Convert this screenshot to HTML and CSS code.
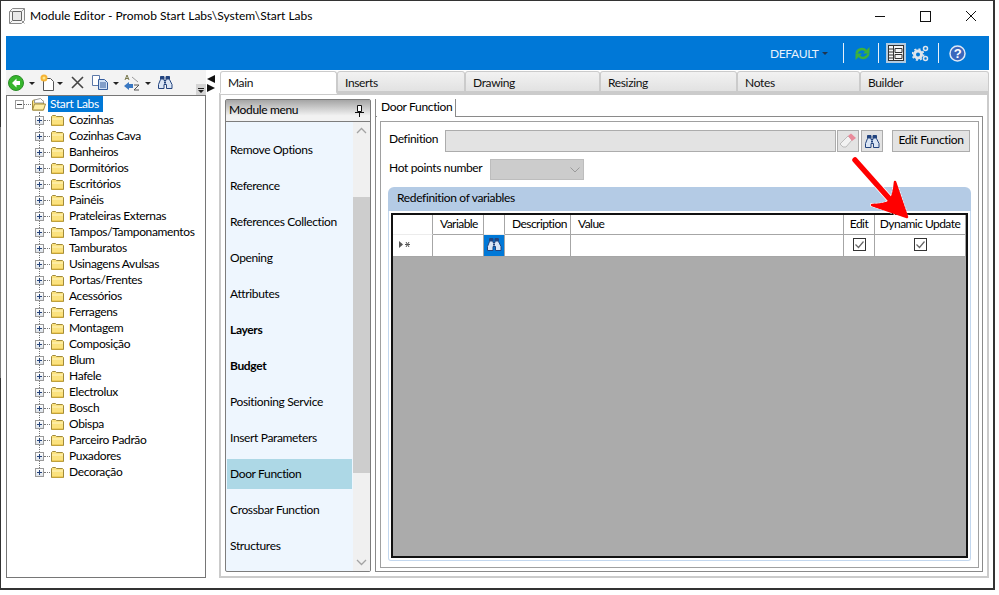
FILE: index.html
```html
<!DOCTYPE html>
<html lang="en">
<head>
    <meta charset="UTF-8">
    <meta name="viewport" content="width=device-width, initial-scale=1.0">
    <title>Module Editor</title>
    <link rel="stylesheet" href="styles.css">
</head>
<body>
    <svg class="sprite" width="0" height="0">
        <symbol id="i-folder" viewBox="0 0 14 12">
            <path d="M1.500 11.500V2.500l1-1h3l1 1h6l1 1v8z" fill="#fbe27e" stroke="#a08a3c"/>
            <path d="M2 5h11" stroke="#fff6c4" fill="none"/>
            <path d="M2 11h11" stroke="#e2b93a" fill="none"/>
        </symbol>
        <symbol id="i-binoculars" viewBox="0 0 16 15">
            <path d="M3.500 1.500h3.500v4h2v-4h3.500v3l2.500 5v4h-5.500v-4H7v4H1.500v-4l2-5z" fill="#dbe6f5" stroke="#23447f"/>
            <path d="M3.500 1.500h3.500v3h-3.500zM9 1.500h3.500v3H9z" fill="#23447f"/>
            <path d="M7 6.500h2v2H7z" fill="#23447f"/>
        </symbol>
        <symbol id="i-check" viewBox="0 0 13 13">
            <rect x=".5" y=".5" width="12" height="12" fill="#fff" stroke="#333"/>
            <path d="M2.500 6.500l3 3 5-6" fill="none" stroke="#666" stroke-width="1.2"/>
        </symbol>
    </svg>

    <div class="window">
        <header class="titlebar">
            <svg class="app-icon" width="16" height="16" viewBox="0 0 16 16">
                <path d="M.5 3.500l3-3h12v12l-3 3H.5z" fill="#f6f6f6" stroke="#888"/>
                <path d="M3.500 3.500h9v9h-9z" fill="#e8e8e8" stroke="#666"/>
                <path d="M.5 3.500h3M12.500 12.500l3 3M3.500 12.500l-3 3M12.500 3.500l3-3" stroke="#999" fill="none"/>
            </svg>
            <div class="title">Module Editor - Promob Start Labs\System\Start Labs</div>
            <div class="win-controls">
                <svg width="46" height="30" viewBox="0 0 46 30"><path d="M20 15.500h10" stroke="#111"/></svg>
                <svg width="46" height="30" viewBox="0 0 46 30"><rect x="19.500" y="10.500" width="10" height="10" fill="none" stroke="#111"/></svg>
                <svg width="46" height="30" viewBox="0 0 46 30"><path d="M19 10l10 10M29 10L19 20" stroke="#111" fill="none"/></svg>
            </div>
        </header>

        <div class="ribbon">
            <span class="profile">DEFAULT</span>
            <span class="caret"></span>
            <span class="rib-sep sep-a"></span>
            <svg class="rib-icon" width="17" height="17" viewBox="0 0 17 17">
                <path d="M2.500 8.500C3.500 4 9 2.500 12 6M14.500 8.500C13.500 13 8 14.500 5 11" fill="none" stroke="#3fb13a" stroke-width="2.400"/>
                <path d="M15.500 2v6.500H9zM1.500 15V8.500H8z" fill="#3fb13a"/>
            </svg>
            <span class="rib-sep sep-b"></span>
            <span class="layout-btn">
                <svg width="16" height="16" viewBox="0 0 16 16">
                    <rect x=".5" y=".5" width="15" height="15" fill="#f6f6f6" stroke="#333"/>
                    <path d="M5.500 1v14M1 4h4M1 7h4M1 10h4M1 13h4M7 3.500h7v4H7zM7 9.500h7v4H7z" fill="none" stroke="#333"/>
                </svg>
            </span>
            <svg class="rib-icon gears" width="17" height="17" viewBox="0 0 17 17">
                <circle cx="6" cy="9.500" r="3.500" fill="none" stroke="#dfe5ec" stroke-width="3"/>
                <circle cx="6" cy="9.500" r="5.500" fill="none" stroke="#dfe5ec" stroke-width="1.800" stroke-dasharray="2 2.300"/>
                <circle cx="13.500" cy="3.500" r="2" fill="none" stroke="#dfe5ec" stroke-width="1.500"/>
                <circle cx="13.500" cy="13.500" r="2" fill="none" stroke="#dfe5ec" stroke-width="1.500"/>
            </svg>
            <span class="rib-sep sep-c"></span>
            <svg class="rib-icon help" width="17" height="17" viewBox="0 0 17 17">
                <circle cx="8.500" cy="8.500" r="7.500" fill="#3a67bd" stroke="#dfe8f6" stroke-width="1.500"/>
                <text x="8.500" y="13" class="help-mark">?</text>
            </svg>
        </div>

        <div class="workspace">
            <aside class="left">
                <div class="toolbar">
                    <svg width="16" height="16" viewBox="0 0 16 16">
                        <circle cx="8" cy="8" r="7.500" fill="#35b52c" stroke="#2c8c28"/>
                        <path d="M8.500 3.500L4 8l4.500 4.500V10H12V6H8.500z" fill="#fff"/>
                    </svg>
                    <span class="tb-caret caret-a"></span>
                    <svg class="tb-new" width="15" height="17" viewBox="0 0 15 17">
                        <path d="M3.500 4.500h7l3 3v9h-10z" fill="#fff" stroke="#555"/>
                        <circle cx="4" cy="4" r="3.500" fill="#f5b335"/>
                        <circle cx="4" cy="4" r="1.500" fill="#ffe98a"/>
                    </svg>
                    <span class="tb-caret caret-b"></span>
                    <svg class="tb-del" width="13" height="13" viewBox="0 0 13 13"><path d="M1 1l11 11M12 1L1 12" stroke="#444" stroke-width="1.600" fill="none"/></svg>
                    <svg class="tb-copy" width="16" height="15" viewBox="0 0 16 15">
                        <path d="M.5.500h7v10h-7z" fill="#fff" stroke="#5c78a8"/>
                        <path d="M6.500 4.500h6l3 3v7h-9z" fill="#cfe0f5" stroke="#345c9c"/>
                        <path d="M8 8h6M8 10h6M8 12h6" stroke="#345c9c"/>
                    </svg>
                    <span class="tb-caret caret-c"></span>
                    <svg class="tb-sort" width="16" height="17" viewBox="0 0 16 17">
                        <path d="M1 6l2-5 2 5M1.500 4.500h3" fill="none" stroke="#7a7a50"/>
                        <path d="M0 12l5-4v2h4v4H5v2z" fill="#3a78c2"/>
                        <path d="M10 11h5l-5 5h5" fill="none" stroke="#555"/>
                        <path d="M8 3l6 5" stroke="#999"/>
                    </svg>
                    <span class="tb-caret caret-d"></span>
                    <svg class="tb-find" width="16" height="15"><use href="#i-binoculars"/></svg>
                    <svg class="tb-grip" width="10" height="11" viewBox="0 0 10 11"><path d="M2 4h6v1H2zM2 6h6L5 9z" fill="#222"/></svg>
                </div>
                <div class="tree">
                    <div class="root-row">
                        <span class="expander minus"></span>
                        <span class="dots root-dots"></span>
                        <svg class="folder" width="15" height="13" viewBox="0 0 15 13">
                            <path d="M1.500 12V3l1-1h3l1 1h6v9z" fill="#fbe27e" stroke="#a08a3c"/>
                            <path d="M3.500 5V2l6-1.500 3 3V5z" fill="#fff" stroke="#999"/>
                            <path d="M1.500 12l2-6h11l-2 6z" fill="#fdeea6" stroke="#a08a3c"/>
                        </svg>
                        <span class="root-label">Start Labs</span>
                    </div>
                    <ul class="tree-list">
                        <li class="node"><span class="expander"></span><span class="dots"></span><svg class="folder" width="14" height="12"><use href="#i-folder"/></svg><span class="node-label">Cozinhas</span></li>
                        <li class="node"><span class="expander"></span><span class="dots"></span><svg class="folder" width="14" height="12"><use href="#i-folder"/></svg><span class="node-label">Cozinhas Cava</span></li>
                        <li class="node"><span class="expander"></span><span class="dots"></span><svg class="folder" width="14" height="12"><use href="#i-folder"/></svg><span class="node-label">Banheiros</span></li>
                        <li class="node"><span class="expander"></span><span class="dots"></span><svg class="folder" width="14" height="12"><use href="#i-folder"/></svg><span class="node-label">Dormitórios</span></li>
                        <li class="node"><span class="expander"></span><span class="dots"></span><svg class="folder" width="14" height="12"><use href="#i-folder"/></svg><span class="node-label">Escritórios</span></li>
                        <li class="node"><span class="expander"></span><span class="dots"></span><svg class="folder" width="14" height="12"><use href="#i-folder"/></svg><span class="node-label">Painéis</span></li>
                        <li class="node"><span class="expander"></span><span class="dots"></span><svg class="folder" width="14" height="12"><use href="#i-folder"/></svg><span class="node-label">Prateleiras Externas</span></li>
                        <li class="node"><span class="expander"></span><span class="dots"></span><svg class="folder" width="14" height="12"><use href="#i-folder"/></svg><span class="node-label">Tampos/Tamponamentos</span></li>
                        <li class="node"><span class="expander"></span><span class="dots"></span><svg class="folder" width="14" height="12"><use href="#i-folder"/></svg><span class="node-label">Tamburatos</span></li>
                        <li class="node"><span class="expander"></span><span class="dots"></span><svg class="folder" width="14" height="12"><use href="#i-folder"/></svg><span class="node-label">Usinagens Avulsas</span></li>
                        <li class="node"><span class="expander"></span><span class="dots"></span><svg class="folder" width="14" height="12"><use href="#i-folder"/></svg><span class="node-label">Portas/Frentes</span></li>
                        <li class="node"><span class="expander"></span><span class="dots"></span><svg class="folder" width="14" height="12"><use href="#i-folder"/></svg><span class="node-label">Acessórios</span></li>
                        <li class="node"><span class="expander"></span><span class="dots"></span><svg class="folder" width="14" height="12"><use href="#i-folder"/></svg><span class="node-label">Ferragens</span></li>
                        <li class="node"><span class="expander"></span><span class="dots"></span><svg class="folder" width="14" height="12"><use href="#i-folder"/></svg><span class="node-label">Montagem</span></li>
                        <li class="node"><span class="expander"></span><span class="dots"></span><svg class="folder" width="14" height="12"><use href="#i-folder"/></svg><span class="node-label">Composição</span></li>
                        <li class="node"><span class="expander"></span><span class="dots"></span><svg class="folder" width="14" height="12"><use href="#i-folder"/></svg><span class="node-label">Blum</span></li>
                        <li class="node"><span class="expander"></span><span class="dots"></span><svg class="folder" width="14" height="12"><use href="#i-folder"/></svg><span class="node-label">Hafele</span></li>
                        <li class="node"><span class="expander"></span><span class="dots"></span><svg class="folder" width="14" height="12"><use href="#i-folder"/></svg><span class="node-label">Electrolux</span></li>
                        <li class="node"><span class="expander"></span><span class="dots"></span><svg class="folder" width="14" height="12"><use href="#i-folder"/></svg><span class="node-label">Bosch</span></li>
                        <li class="node"><span class="expander"></span><span class="dots"></span><svg class="folder" width="14" height="12"><use href="#i-folder"/></svg><span class="node-label">Obispa</span></li>
                        <li class="node"><span class="expander"></span><span class="dots"></span><svg class="folder" width="14" height="12"><use href="#i-folder"/></svg><span class="node-label">Parceiro Padrão</span></li>
                        <li class="node"><span class="expander"></span><span class="dots"></span><svg class="folder" width="14" height="12"><use href="#i-folder"/></svg><span class="node-label">Puxadores</span></li>
                        <li class="node"><span class="expander"></span><span class="dots"></span><svg class="folder" width="14" height="12"><use href="#i-folder"/></svg><span class="node-label">Decoração</span></li>
                    </ul>
                </div>
            </aside>

            <div class="splitter">
                <span class="tri tri-left"></span>
                <span class="tri tri-right"></span>
            </div>

            <section class="main">
                <nav class="tabs">
                    <a class="tab active tab-main">Main</a>
                    <a class="tab tab-inserts">Inserts</a>
                    <a class="tab tab-drawing">Drawing</a>
                    <a class="tab tab-resizing">Resizing</a>
                    <a class="tab tab-notes">Notes</a>
                    <a class="tab tab-builder">Builder</a>
                </nav>
                <div class="tab-body">
                    <div class="menu">
                        <div class="menu-head">
                            <span>Module menu</span>
                            <svg width="9" height="12" viewBox="0 0 9 12"><path d="M2.500.500h4v6h-4zM0 7.500h9M4.500 8v4" fill="#fff" stroke="#111"/></svg>
                        </div>
                        <div class="menu-body">
                            <ul class="menu-list">
                                <li>Remove Options</li>
                                <li>Reference</li>
                                <li>References Collection</li>
                                <li>Opening</li>
                                <li>Attributes</li>
                                <li class="bold">Layers</li>
                                <li class="bold">Budget</li>
                                <li>Positioning Service</li>
                                <li>Insert Parameters</li>
                                <li class="current">Door Function</li>
                                <li>Crossbar Function</li>
                                <li>Structures</li>
                            </ul>
                            <div class="scrollbar">
                                <svg class="chev" width="17" height="17" viewBox="0 0 17 17"><path d="M4 11l4.500-4.500L13 11" fill="none" stroke="#a3a3a3" stroke-width="1.300"/></svg>
                                <div class="thumb"></div>
                                <svg class="chev" width="17" height="17" viewBox="0 0 17 17"><path d="M4 6l4.500 4.500L13 6" fill="none" stroke="#a3a3a3" stroke-width="1.300"/></svg>
                            </div>
                        </div>
                    </div>

                    <div class="door">
                        <div class="door-tabs"><span class="door-tab">Door Function</span></div>
                        <div class="door-outer">
                            <div class="door-inner">
                                <div class="def-row">
                                    <label class="def-label">Definition</label>
                                    <div class="def-input"></div>
                                    <span class="mini-btn">
                                        <svg width="18" height="16" viewBox="0 0 18 16">
                                            <path d="M1 11l8-8 4 4-6 7H4z" fill="#f2f2f2" stroke="#bbb"/>
                                            <path d="M9 3l3-2.500 5 4.500-4 3z" fill="#e98a9a"/>
                                        </svg>
                                    </span>
                                    <span class="mini-btn second">
                                        <svg width="16" height="15"><use href="#i-binoculars"/></svg>
                                    </span>
                                    <span class="edit-btn">Edit Function</span>
                                </div>
                                <div class="hot-row">
                                    <label class="hot-label">Hot points number</label>
                                    <div class="combo">
                                        <svg width="10" height="6" viewBox="0 0 10 6"><path d="M.5.500L5 5 9.500.500" fill="none" stroke="#9a9a9a"/></svg>
                                    </div>
                                </div>
                                <div class="group">
                                    <div class="group-head">Redefinition of variables</div>
                                    <div class="group-body">
                                        <div class="grid">
                                            <div class="grid-rows">
                                                <div class="cell"></div>
                                                <div class="cell">Variable</div>
                                                <div class="cell"></div>
                                                <div class="cell">Description</div>
                                                <div class="cell">Value</div>
                                                <div class="cell center">Edit</div>
                                                <div class="cell center">Dynamic Update</div>
                                                <div class="cell row-head"><svg width="13" height="7" viewBox="0 0 13 7"><path d="M0 0l4 3.500L0 7z" fill="#555"/><path d="M7 1l3 5M10 1L7 6M6 3.500h5" stroke="#555" fill="none"/></svg></div>
                                                <div class="cell"></div>
                                                <div class="cell find-cell"><svg width="16" height="15"><use href="#i-binoculars"/></svg></div>
                                                <div class="cell"></div>
                                                <div class="cell"></div>
                                                <div class="cell center"><svg width="13" height="13"><use href="#i-check"/></svg></div>
                                                <div class="cell center"><svg width="13" height="13"><use href="#i-check"/></svg></div>
                                            </div>
                                        </div>
                                    </div>
                                </div>
                            </div>
                        </div>
                    </div>
                </div>
            </section>
        </div>

        <svg class="red-arrow" width="70" height="70" viewBox="0 0 70 70">
            <path d="M8 5L48 50" fill="none" stroke="#fff" stroke-width="7" stroke-linecap="round" stroke-dasharray="2 1.500"/>
            <path d="M48 27L60 62L25 50Q38 50 43 46Q47 40 48 27z" fill="#fff" stroke="#fff" stroke-width="4" stroke-linejoin="round" stroke-dasharray="2 1.500"/>
            <path d="M8 5L48 50" fill="none" stroke="#f00" stroke-width="5.500" stroke-linecap="round"/>
            <path d="M48 27L60 62L25 50Q38 50 43 46Q47 40 48 27z" fill="#f00" stroke="#f00" stroke-width="2.500" stroke-linejoin="round"/>
        </svg>
    </div>
</body>
</html>
```

FILE: styles.css
```css
* {
    box-sizing: border-box;
}
body {
    margin: 0;
    padding: 0;
    background-color: #fff;
    font-family: Lato, Roboto, sans-serif;
    font-size: 12px;
    letter-spacing: -0.35px;
    color: #000;
}
ul {
    list-style: none;
    margin: 0;
    padding: 0;
}
svg {
    display: block;
    flex: none;
}
.sprite {
    position: absolute;
}
/* left edge is a 1px background: it turns lighter over part of its height */
.window {
    position: relative;
    width: 995px;
    height: 590px;
    padding-left: 1px;
    border: solid #333;
    border-width: 1px 2px 2px 0;
    background: linear-gradient(#333 126px, #7a7a7a 126px, #7a7a7a 377px, #333 377px) 0 0 / 1px 100% no-repeat, #fff;
    overflow: hidden;
}

/* title bar */
.titlebar {
    height: 35px;
    display: flex;
    align-items: center;
    padding: 0 0 6px 8px;
}
.app-icon {
    margin-right: 5px;
}
.title {
    flex: 1;
    letter-spacing: 0;
}
.win-controls {
    display: flex;
}

/* blue ribbon */
.ribbon {
    height: 34px;
    margin: 0 4px 0 5px;
    background-color: #0078d7;
    display: flex;
    align-items: center;
    padding-left: 764px;
}
.profile {
    color: #e8f1fb;
    width: 48px;
}
.caret {
    margin-left: 4px;
    border: 3px solid transparent;
    border-top: 3px solid #1f3550;
    border-bottom: 0;
}
.rib-sep {
    width: 1px;
    height: 20px;
    background-color: #e6f0fa;
}
.sep-a {
    margin-left: 15px;
}
.rib-icon {
    margin-left: 10px;
}
.sep-b {
    margin-left: 7px;
}
.layout-btn {
    margin-left: 7px;
    width: 20px;
    height: 20px;
    background-color: #b3cbe0;
    display: flex;
    align-items: center;
    justify-content: center;
}
.gears {
    margin-left: 6px;
}
.sep-c {
    margin-left: 9px;
}
.help-mark {
    font-family: 'Liberation Sans', sans-serif;
    font-weight: bold;
    font-size: 13px;
    fill: #fff;
    text-anchor: middle;
}

/* left column */
.workspace {
    display: flex;
    margin: 0 4px 0 5px;
    height: 509px;
}
.left {
    width: 200px;
    flex: none;
    display: flex;
    flex-direction: column;
    height: 508px;
}
.toolbar {
    height: 25px;
    background-color: #f3f3f3;
    display: flex;
    align-items: center;
    padding-left: 2px;
}
.tb-caret {
    border: 3px solid transparent;
    border-top: 3px solid #222;
    border-bottom: 0;
    margin-top: 2px;
}
.caret-a {
    margin-left: 5px;
}
.tb-new {
    margin-left: 5px;
}
.caret-b {
    margin-left: 2px;
}
.tb-del {
    margin-left: 8px;
}
.tb-copy {
    margin-left: 8px;
}
.caret-c {
    margin-left: 5px;
}
.tb-sort {
    margin-left: 5px;
}
.caret-d {
    margin-left: 5px;
}
.tb-find {
    margin-left: 6px;
}
.tb-grip {
    margin-left: auto;
    align-self: flex-end;
    background-color: #d4d4d4;
}
.tree {
    flex: 1;
    background-color: #fff;
    border: 1px solid #767676;
}
.root-row {
    height: 16px;
    display: flex;
    align-items: center;
    padding-left: 8px;
}
.expander {
    width: 9px;
    height: 9px;
    flex: none;
    border: 1px solid #9a9a9a;
    background:
        linear-gradient(#24427a, #24427a) center / 5px 1px no-repeat,
        linear-gradient(#24427a, #24427a) center / 1px 5px no-repeat,
        linear-gradient(#fff, #dde3ea);
}
.expander.minus {
    background:
        linear-gradient(#444, #444) center / 5px 1px no-repeat,
        #fff;
}
.dots {
    width: 6px;
    flex: none;
    border-top: 1px dotted #777;
}
.root-dots {
    width: 7px;
}
.root-label {
    margin-left: 2px;
    padding: 0 2px;
    height: 16px;
    line-height: 15px;
    width: 55px;
    background-color: #0078d7;
    color: #fff;
    white-space: nowrap;
}
.tree-list {
    margin-left: 32px;
    height: 360px;
    border-left: 1px dotted #777;
}
.node {
    height: 16px;
    display: flex;
    align-items: center;
    margin-left: -5px;
    white-space: nowrap;
}
.node-label {
    margin-left: 5px;
    margin-top: -1px;
}

/* splitter between tree and tabs */
.splitter {
    width: 13px;
    flex: none;
    padding-top: 5px;
    padding-left: 1px;
    display: flex;
    flex-direction: column;
    gap: 1px;
}
.tri {
    width: 0;
    border-style: solid;
    border-width: 4px 0;
    border-color: transparent;
}
.tri-left {
    border-right: 8px solid #111;
}
.tri-right {
    border-left: 8px solid #111;
}

/* main tabs */
.main {
    width: 770px;
    height: 508px;
    flex: none;
    display: flex;
    flex-direction: column;
}
.tabs {
    height: 22px;
    flex: none;
    display: flex;
    padding-left: 1px;
    margin-top: 1px;
}
.tab {
    display: block;
    padding: 3px 0 0 7px;
    height: 22px;
    background: linear-gradient(#f2f2f2, #e2e2e2);
    border: 2px solid #cbcbcb;
    border-width: 1px 1px 2px 1px;
    border-radius: 3px 3px 0 0;
    color: #111;
}
.tab.active {
    background: #fff;
    border-bottom-color: #fff;
    height: 23px;
    position: relative;
}
.tab-main {
    width: 117px;
}
.tab-inserts {
    width: 128px;
}
.tab-drawing {
    width: 135px;
}
.tab-resizing {
    width: 137px;
}
.tab-notes {
    width: 123px;
}
.tab-builder {
    width: 129px;
}
.tab-body {
    flex: 1;
    min-height: 0;
    border: 2px solid #cbcbcb;
    background-color: #fff;
    display: flex;
    padding: 4px;
    gap: 4px;
}

/* module menu */
.menu {
    width: 146px;
    flex: none;
    display: flex;
    flex-direction: column;
    border: 1px solid #7d7d7d;
    border-radius: 2px;
    background-color: #eef6fe;
}
.menu-head {
    height: 22px;
    flex: none;
    display: flex;
    align-items: center;
    justify-content: space-between;
    padding: 0 6px 0 3px;
    background: linear-gradient(#a5a5a5, #f2f2f2 75%);
    border-bottom: 1px solid #7d7d7d;
}
.menu-head span {
    margin-top: -3px;
}
.menu-body {
    flex: 1;
    display: flex;
    min-height: 0;
}
.menu-list {
    flex: 1;
    padding: 10px 0 0 1px;
}
.menu-list li {
    height: 36px;
    line-height: 36px;
    padding-left: 3px;
    white-space: nowrap;
}
.menu-list li.bold {
    font-weight: bold;
}
.menu-list li.current {
    background-color: #add8e6;
    height: 30px;
    line-height: 30px;
    margin: 3px 1px 3px 0;
}
.scrollbar {
    width: 17px;
    flex: none;
    background-color: #f0f0f0;
    display: flex;
    flex-direction: column;
}
.thumb {
    height: 276px;
    margin-top: 58px;
    margin-bottom: auto;
    background-color: #cdcdcd;
}

/* door function panel */
.door {
    flex: 1;
    min-width: 0;
    display: flex;
    flex-direction: column;
}
.door-tabs {
    height: 17px;
    flex: none;
    padding-left: 1px;
    border-left: 1px solid #8a8a8a;
    display: flex;
}
.door-tab {
    width: 79px;
    height: 18px;
    padding: 0 0 0 4px;
    line-height: 15px;
    background-color: #fff;
    border-right: 1px solid #8a8a8a;
    white-space: nowrap;
    position: relative;
    z-index: 1;
}
.door-outer {
    flex: 1;
    min-height: 0;
    border: 1px solid #8a8a8a;
    padding: 4px 3px 3px 4px;
}
.door-inner {
    height: 100%;
    border: 1px solid #a0a0a0;
    background: #fff;
    padding: 8px 7px 0 8px;
    display: flex;
    flex-direction: column;
}
.def-row {
    display: flex;
    align-items: center;
    height: 22px;
    flex: none;
}
.def-label {
    width: 56px;
    flex: none;
    margin-bottom: 6px;
}
.def-input {
    width: 391px;
    flex: none;
    height: 22px;
    border: 1px solid #acacac;
    background-color: #e3e3e3;
}
.mini-btn {
    width: 22px;
    height: 22px;
    flex: none;
    margin-left: 1px;
    border: 1px solid #acacac;
    background-color: #e3e3e3;
    display: flex;
    align-items: center;
    justify-content: center;
}
.mini-btn.second {
    margin-left: 2px;
}
.edit-btn {
    width: 78px;
    height: 22px;
    flex: none;
    margin-left: 9px;
    border: 1px solid #acacac;
    background-color: #e3e3e3;
    text-align: center;
    line-height: 18px;
    white-space: nowrap;
}
.hot-row {
    display: flex;
    align-items: center;
    height: 21px;
    flex: none;
    margin-top: 7px;
}
.hot-label {
    width: 101px;
    flex: none;
    margin-bottom: 5px;
    white-space: nowrap;
}
.combo {
    width: 94px;
    height: 21px;
    flex: none;
    background-color: #cccccc;
    border: 1px solid #bdbdbd;
    display: flex;
    align-items: center;
    justify-content: flex-end;
    padding-right: 3px;
}
.group {
    flex: 1;
    margin: 7px 0 6px -1px;
    display: flex;
    flex-direction: column;
    min-height: 0;
}
.group-head {
    height: 24px;
    flex: none;
    padding-left: 9px;
    line-height: 22px;
    border-radius: 6px 6px 0 0;
    background-color: #b4cbe5;
}
.group-body {
    flex: 1;
    border: solid #c3d7ee;
    border-width: 0 1px 1px 1px;
    border-radius: 0 0 3px 3px;
    padding: 2px;
    min-height: 0;
}
.grid {
    height: 100%;
    border: 2px solid #111;
    background-color: #ababab;
}
.grid-rows {
    display: grid;
    grid-template-columns: 40px 51px 21px 66px 273px 31px 91px;
    grid-template-rows: 20px 22px;
    background-color: #fff;
}
.cell {
    border-right: 1px solid #a6a6a6;
    border-bottom: 1px solid #a6a6a6;
    padding-left: 7px;
    padding-bottom: 2px;
    letter-spacing: -0.55px;
    white-space: nowrap;
    display: flex;
    align-items: center;
}
.cell:nth-child(1),
.cell:nth-child(3) {
    border-bottom-color: #ececec;
}
.cell.center {
    justify-content: center;
    padding-left: 0;
}
.row-head {
    padding-left: 6px;
}
.find-cell {
    background-color: #0078d7;
    padding-left: 2px;
}

/* red annotation on top of the window */
.red-arrow {
    position: absolute;
    left: 847px;
    top: 154px;
}
```
